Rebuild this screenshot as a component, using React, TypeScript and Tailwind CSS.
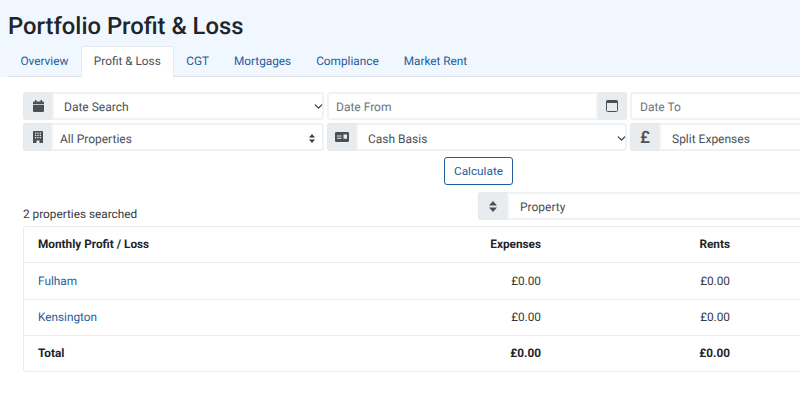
import { ChevronDown } from "lucide-react";
import type { ReactNode } from "react";

const tabs = ["Overview", "Profit & Loss", "CGT", "Mortgages", "Compliance", "Market Rent"];

const rows = [
  { name: "Fulham", expenses: "£0.00", rents: "£0.00" },
  { name: "Kensington", expenses: "£0.00", rents: "£0.00" },
];

function CalendarSolid() {
  return (
    <svg viewBox="0 0 11 12" className="h-[12px] w-[11px]" fill="#495057">
      <path d="M2 0h1.500v1.500h4V0H9v1.500h1a1 1 0 0 1 1 1V4H0V2.500a1 1 0 0 1 1-1h1zM0 4.700h11V11a1 1 0 0 1-1 1H1a1 1 0 0 1-1-1z" />
    </svg>
  );
}

function CalendarOutline() {
  return (
    <svg viewBox="0 0 12 12" className="h-[12px] w-[12px]" fill="none">
      <rect x="0.500" y="0.500" width="11" height="11" rx="1" stroke="#495057" />
      <rect x="0.500" y="0.500" width="11" height="2.500" fill="#495057" />
    </svg>
  );
}

function Building() {
  return (
    <svg viewBox="0 0 10 12" className="h-[12px] w-[10px]">
      <path fill="#495057" fillRule="evenodd" d="M.7 0h8.600a.7.7 0 0 1 .7.7V12H6.500V9.500h-3V12H0V.7A.7.7 0 0 1 .7 0zM2 1.500v1.200h1.300V1.500zM4.350 1.500v1.200h1.300V1.500zM6.700 1.500v1.200H8V1.500zM2 3.800V5h1.300V3.800zM4.350 3.800V5h1.300V3.800zM6.700 3.800V5H8V3.800zM2 6.100v1.200h1.300V6.100zM4.350 6.100v1.200h1.300V6.100zM6.700 6.100v1.200H8V6.100z" />
    </svg>
  );
}

function IdCard() {
  return (
    <svg viewBox="0 0 14 10" className="h-[10px] w-[14px]">
      <path fill="#495057" fillRule="evenodd" d="M1.200 0h11.600A1.200 1.200 0 0 1 14 1.200v7.600A1.200 1.200 0 0 1 12.800 10H1.200A1.200 1.200 0 0 1 0 8.800V1.200A1.200 1.200 0 0 1 1.200 0zM2 5.800v1h4.500v-1zM8.500 2.500v4.300H12V2.500zM2 3.500v1h4.500v-1z" />
    </svg>
  );
}

function SortIcon() {
  return (
    <svg viewBox="0 0 8 11" className="h-[11px] w-[8px]" fill="#495057">
      <path d="M4 0l4 4.500H0zM4 11L0 6.500h8z" />
    </svg>
  );
}

function Addon({ children, side = "left", w = "w-[29px]" }: { children: ReactNode; side?: "left" | "right"; w?: string }) {
  const edge = side === "left" ? "rounded-l-[3px] border-r-0" : "rounded-r-[3px] border-l-0";
  return (
    <div className={`flex h-full shrink-0 items-center justify-center border border-[#e6e9ec] bg-[#e9ecef] text-[#495057] ${w} ${edge}`}>
      {children}
    </div>
  );
}

function Field({ text, chevron, sort, pl = "pl-[9px]", pt = "pt-[2px]", muted, rounded = "rounded-r-[3px]" }: { text: string; chevron?: boolean; sort?: boolean; pl?: string; pt?: string; muted?: boolean; rounded?: string }) {
  return (
    <div className={`flex h-full min-w-0 flex-1 items-center justify-between border-2 border-[#f1f2f4] bg-white text-[12px] ${pl} ${pt} ${rounded} ${muted ? "text-[#6c757d]" : "text-[#495057]"}`}>
      <span>{text}</span>
      {chevron && <ChevronDown size={13} strokeWidth={2.200} className="-mt-[2px] -mr-[3px] text-[#343a40]" />}
      {sort && (
        <svg viewBox="0 0 6 9" className="mr-[7px] -mt-[2px] h-[9px] w-[6px]" fill="#343a40">
          <path d="M3 0l3 3.500H0zM3 9L0 5.500h6z" />
        </svg>
      )}
    </div>
  );
}

function Cell({ children, bold, right, w }: { children: ReactNode; bold?: boolean; right?: boolean; w: string }) {
  return (
    <div className={`shrink-0 px-[14px] ${w} ${right ? "text-right" : ""} ${bold ? "font-bold text-[#212529]" : "pt-[2px]"}`}>
      {children}
    </div>
  );
}

export default function App() {
  return (
    <div className="h-[416px] w-[800px] overflow-hidden bg-white font-['Roboto',sans-serif] text-[#343a40] [text-rendering:geometricPrecision]">
      <div className="h-[77px] bg-[#f0f7ff] pl-[8px] pt-[11px]">
        <h1 className="h-[35px] text-[23.800px] leading-[30px] font-medium text-[#212529]">Portfolio Profit &amp; Loss</h1>
        <div className="flex h-[31px] border-b border-[#dee2e6] text-[11.800px]">
          {tabs.map((tab) =>
            tab === "Profit & Loss" ? (
              <div key={tab} className="flex h-[32px] items-center rounded-t-[3px] border border-b-0 border-[#e6ebf0] bg-white px-[12px] pb-[2px] text-[#495057]">
                {tab}
              </div>
            ) : (
              <div key={tab} className="flex items-center px-[12.500px] pt-[2px] text-[#1f5c99]">
                {tab}
              </div>
            )
          )}
        </div>
      </div>

      <div className="w-[934px] pl-[23px]">
        <div className="mt-[15px] flex h-[28px] gap-[3px]">
          <div className="flex w-[301px] shrink-0">
            <Addon><CalendarSolid /></Addon>
            <Field text="Date Search" chevron pl="pl-[10px]" />
          </div>
          <div className="flex w-[300px] shrink-0">
            <Field text="Date From" muted pl="pl-[7px]" rounded="rounded-l-[3px]" />
            <Addon side="right"><CalendarOutline /></Addon>
          </div>
          <div className="flex w-[301px] shrink-0">
            <Field text="Date To" muted pl="pl-[8px]" rounded="rounded-[3px]" />
          </div>
        </div>

        <div className="mt-[3px] flex h-[28px] gap-[3px]">
          <div className="flex w-[301px] shrink-0">
            <Addon w="w-[28px]"><Building /></Addon>
            <Field text="All Properties" sort pl="pl-[7px]" pt="pt-[4px]" />
          </div>
          <div className="flex w-[300px] shrink-0">
            <Addon><IdCard /></Addon>
            <Field text="Cash Basis" chevron pl="pl-[10px]" pt="pt-[4px]" />
          </div>
          <div className="flex w-[301px] shrink-0">
            <Addon><span className="pt-[2px] text-[17px] leading-none font-medium">£</span></Addon>
            <Field text="Split Expenses" pl="pl-[11px]" pt="pt-[4px]" />
          </div>
        </div>

        <div className="mt-[6px] flex justify-center">
          <button className="h-[28px] w-[69px] rounded-[3px] border border-[#1f5c99] bg-white pt-[1px] text-[11.800px] text-[#1f5c99]">Calculate</button>
        </div>

        <div className="mt-[7px] flex h-[28px] items-end justify-between">
          <div className="text-[11.800px] leading-[12px] text-[#343a40]">2 properties searched</div>
          <div className="flex h-[28px] w-[456px] shrink-0">
            <Addon><SortIcon /></Addon>
            <Field text="Property" pl="pl-[11px]" />
          </div>
        </div>

        <div className="mt-[6px] h-[146px] w-[911px] rounded-[3px] border border-[#e9ebed] text-[11.800px]">
          <div className="flex h-[36px] items-center border-b border-[#e9ebed]">
            <Cell bold w="w-[342px]">Monthly Profit / Loss</Cell>
            <Cell bold right w="w-[189px]">Expenses</Cell>
            <Cell bold right w="w-[189px]">Rents</Cell>
          </div>
          {rows.map((row) => (
            <div key={row.name} className="flex h-[36.500px] items-center border-b border-[#e9ebed]">
              <Cell w="w-[342px]"><span className="text-[#1f5c99]">{row.name}</span></Cell>
              <Cell right w="w-[189px]">{row.expenses}</Cell>
              <Cell right w="w-[189px]">{row.rents}</Cell>
            </div>
          ))}
          <div className="flex h-[35px] items-center">
            <Cell bold w="w-[342px]">Total</Cell>
            <Cell bold right w="w-[189px]">£0.00</Cell>
            <Cell bold right w="w-[189px]">£0.00</Cell>
          </div>
        </div>
      </div>
    </div>
  );
}
